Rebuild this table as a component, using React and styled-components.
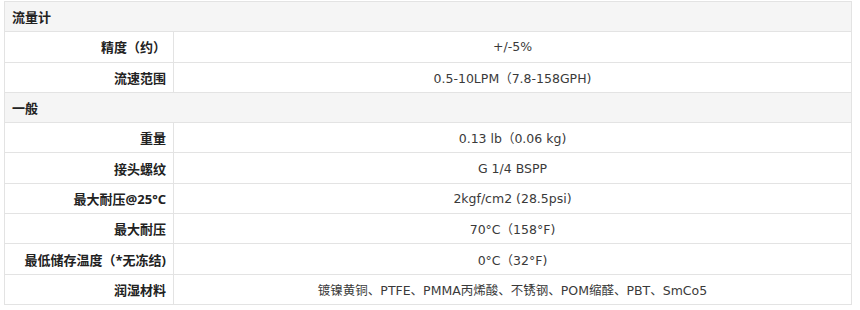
import React, { Fragment } from "react"
import styled, { createGlobalStyle } from "styled-components"

const GlobalStyle = createGlobalStyle`
  body {
    margin: 0;
    background: #fff;
    font-family: "Noto Sans", "Noto Sans CJK SC", sans-serif;
  }
`

const borderColor = "#e3e3e3"

const Wrapper = styled.div`
  padding: 1px 0 0 4px;
`

const SpecTable = styled.table`
  width: 848px;
  border-collapse: collapse;
  font-size: 13px;
  color: #444;
`

const SectionCell = styled.td`
  height: 29.3px;
  padding: 0 7px;
  background: #f5f5f5;
  border: 1px solid ${borderColor};
  font-weight: bold;
  color: #222;
  text-align: left;
`

const LabelCell = styled.td`
  width: 154px;
  height: 29.3px;
  padding: 0 7px;
  border: 1px solid ${borderColor};
  font-weight: bold;
  color: #222;
  text-align: right;
`

const ValueCell = styled.td`
  height: 29.3px;
  padding: 0 7px;
  border: 1px solid ${borderColor};
  font-family: "DejaVu Sans", "Noto Sans CJK SC", sans-serif;
  font-size: 12.5px;
  color: #3a3a3a;
  text-align: center;
`

const specs = [
  {
    section: "流量计",
    rows: [
      ["精度（约）", "+/-5%"],
      ["流速范围", "0.5-10LPM（7.8-158GPH)"],
    ],
  },
  {
    section: "一般",
    rows: [
      ["重量", "0.13 lb（0.06 kg)"],
      ["接头螺纹", "G 1/4 BSPP"],
      ["最大耐压@25°C", "2kgf/cm2 (28.5psi)"],
      ["最大耐压", "70°C（158°F)"],
      ["最低储存温度（*无冻结)", "0°C（32°F)"],
      ["润湿材料", "镀镍黄铜、PTFE、PMMA丙烯酸、不锈钢、POM缩醛、PBT、SmCo5"],
    ],
  },
]

export default function App() {
  return (
    <Wrapper>
      <GlobalStyle />
      <SpecTable>
        <tbody>
          {specs.map(group => (
            <Fragment key={group.section}>
              <tr>
                <SectionCell colSpan={2}>{group.section}</SectionCell>
              </tr>
              {group.rows.map(([label, value]) => (
                <tr key={label}>
                  <LabelCell>{label}</LabelCell>
                  <ValueCell>{value}</ValueCell>
                </tr>
              ))}
            </Fragment>
          ))}
        </tbody>
      </SpecTable>
    </Wrapper>
  )
}
